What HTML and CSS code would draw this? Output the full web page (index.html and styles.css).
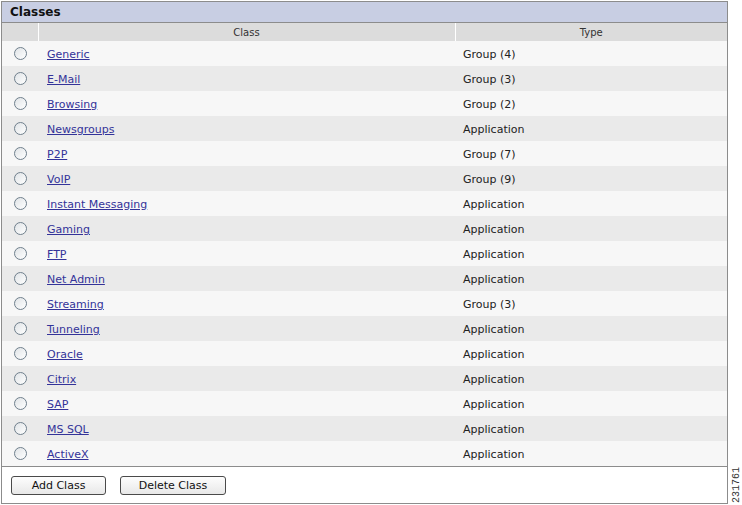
FILE: index.html
```html
<!DOCTYPE html>
<html lang="en">
<head>
  <meta charset="UTF-8">
  <title>Classes</title>
  <link rel="stylesheet" href="styles.css">
</head>
<body>
  <div class="page">
    <div class="panel">
      <div class="panel-title">Classes</div>
      <table class="grid">
        <colgroup>
          <col class="col-sel">
          <col class="col-class">
          <col class="col-type">
        </colgroup>
        <thead>
          <tr><th></th><th>Class</th><th>Type</th></tr>
        </thead>
        <tbody>
          <tr><td><span class="radio"></span></td><td><a href="#">Generic</a></td><td>Group (4)</td></tr>
          <tr><td><span class="radio"></span></td><td><a href="#">E-Mail</a></td><td>Group (3)</td></tr>
          <tr><td><span class="radio"></span></td><td><a href="#">Browsing</a></td><td>Group (2)</td></tr>
          <tr><td><span class="radio"></span></td><td><a href="#">Newsgroups</a></td><td>Application</td></tr>
          <tr><td><span class="radio"></span></td><td><a href="#">P2P</a></td><td>Group (7)</td></tr>
          <tr><td><span class="radio"></span></td><td><a href="#">VoIP</a></td><td>Group (9)</td></tr>
          <tr><td><span class="radio"></span></td><td><a href="#">Instant Messaging</a></td><td>Application</td></tr>
          <tr><td><span class="radio"></span></td><td><a href="#">Gaming</a></td><td>Application</td></tr>
          <tr><td><span class="radio"></span></td><td><a href="#">FTP</a></td><td>Application</td></tr>
          <tr><td><span class="radio"></span></td><td><a href="#">Net Admin</a></td><td>Application</td></tr>
          <tr><td><span class="radio"></span></td><td><a href="#">Streaming</a></td><td>Group (3)</td></tr>
          <tr><td><span class="radio"></span></td><td><a href="#">Tunneling</a></td><td>Application</td></tr>
          <tr><td><span class="radio"></span></td><td><a href="#">Oracle</a></td><td>Application</td></tr>
          <tr><td><span class="radio"></span></td><td><a href="#">Citrix</a></td><td>Application</td></tr>
          <tr><td><span class="radio"></span></td><td><a href="#">SAP</a></td><td>Application</td></tr>
          <tr><td><span class="radio"></span></td><td><a href="#">MS SQL</a></td><td>Application</td></tr>
          <tr><td><span class="radio"></span></td><td><a href="#">ActiveX</a></td><td>Application</td></tr>
        </tbody>
      </table>
      <div class="panel-footer">
        <button class="btn btn-add">Add Class</button>
        <button class="btn btn-delete">Delete Class</button>
      </div>
    </div>
    <div class="fig-id">231761</div>
  </div>
</body>
</html>
```

FILE: styles.css
```css
body {
  margin: 0;
  padding: 1px 0 0 1px;
  font-family: "DejaVu Sans", Verdana, sans-serif;
  font-size: 11px;
  color: #222;
  background: #fff;
}

.page { display: flex; align-items: flex-end; }

.panel {
  flex-shrink: 0;
  width: 725px;
  border: 1px solid #8c8c8c;
  background: #f7f7f7;
}

.panel-title {
  height: 20px;
  line-height: 20px;
  padding-left: 8px;
  background: #c8cee3;
  border-bottom: 1px solid #8c8c8c;
  font-weight: bold;
  font-size: 12px;
  color: #111;
}

.grid {
  width: 100%;
  border-collapse: collapse;
  table-layout: fixed;
}

.col-sel { width: 36px; }
.col-class { width: 417px; }

.grid th {
  height: 17px;
  padding: 1px 0 0;
  background: #dcdcdc;
  font-weight: normal;
  font-size: 10px;
  color: #333;
  border-left: 1px solid #fff;
}
.grid th:first-child { border-left: none; }

.grid td {
  height: 23px;
  padding: 2px 0 0 8px;
  white-space: nowrap;
}
.grid td:first-child { padding: 0 0 0 12px; }
.grid td:nth-child(2) { padding-left: 9px; }

.grid tbody tr:nth-child(odd) { background: #f7f7f7; }
.grid tbody tr:nth-child(even) { background: #eaeaea; }

.grid a { color: #333399; text-decoration: underline; }

.radio {
  display: block;
  width: 11px;
  height: 11px;
  border: 1px solid #6f7f8c;
  border-radius: 50%;
  background: linear-gradient(135deg, #dfe3e6, #fff);
}

.panel-footer {
  border-top: 1px solid #8c8c8c;
  background: #fff;
  padding: 9px 0 8px 9px;
  display: flex;
  gap: 14px;
}

.btn {
  height: 19px;
  padding: 0;
  font-family: "DejaVu Sans", Verdana, sans-serif;
  font-size: 11px;
  color: #111;
  background: linear-gradient(#fdfdfd, #e8e8e8);
  border: 1px solid #4a4a4a;
  border-radius: 3px;
}
.btn-add { width: 95px; }
.btn-delete { width: 106px; }

.fig-id {
  writing-mode: vertical-rl;
  transform: rotate(180deg);
  font-family: "Liberation Mono", monospace;
  font-size: 10px;
  line-height: 10px;
  color: #333;
  margin-left: 4px;
  margin-bottom: 1px;
}
```
